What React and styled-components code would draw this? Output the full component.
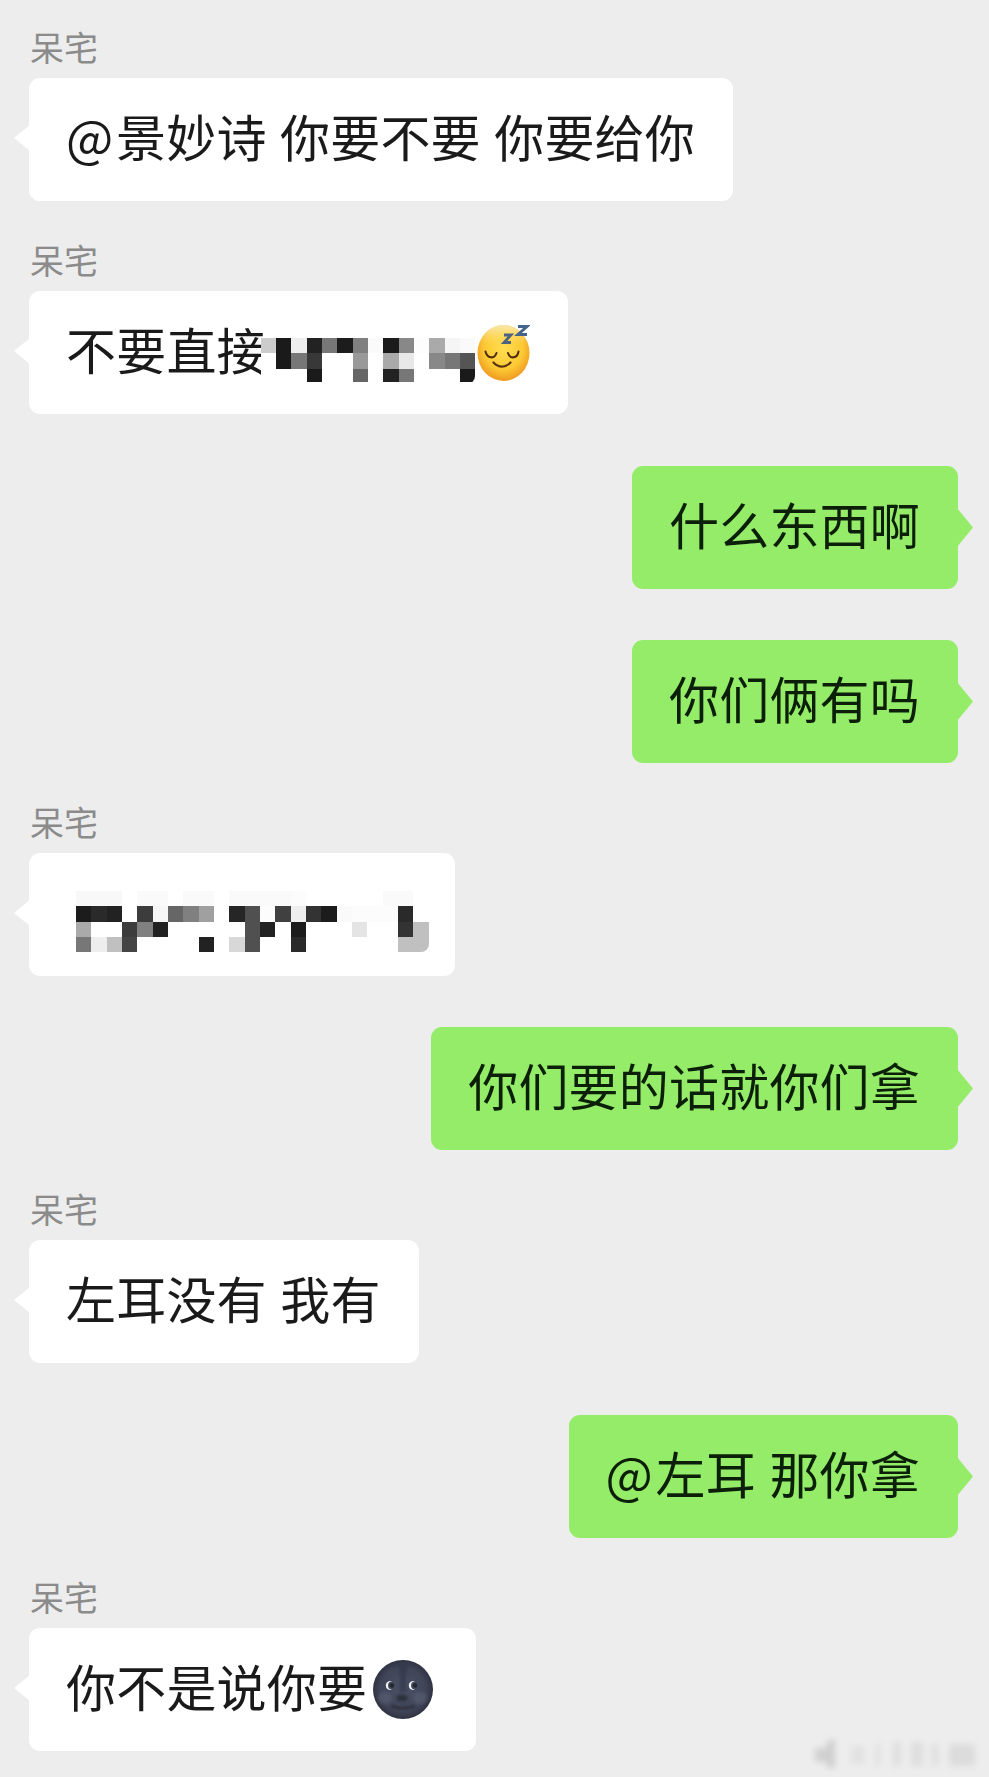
import React from "react";
import styled, { createGlobalStyle } from "styled-components";

const GlobalStyle = createGlobalStyle`
  html, body {
    margin: 0;
    padding: 0;
    background: #ededed;
  }
  body {
    font-family: "Noto Sans CJK SC", "Liberation Sans", sans-serif;
  }
`;

const Page = styled.div`
  width: 989px;
  height: 1777px;
  position: relative;
  overflow: hidden;
  display: flex;
  flex-direction: column;
  padding: 29px 31px 0 29px;
  box-sizing: border-box;
  background: #ededed;
`;

const Message = styled.div`
  display: flex;
  flex-direction: column;
  align-items: ${(props) => (props.$mine ? "flex-end" : "flex-start")};
  margin-top: ${(props) => props.$gap || 0}px;
`;

const Name = styled.div`
  height: 40px;
  line-height: 36px;
  margin-bottom: 9px;
  padding-left: 1px;
  font-size: 34px;
  color: #8b8b8b;
`;

const Bubble = styled.div`
  position: relative;
  display: flex;
  align-items: center;
  height: 123px;
  padding: ${(props) => props.$pad || "0 38px 0 37px"};
  box-sizing: border-box;
  border-radius: 11px;
  background: ${(props) => (props.$mine ? "#95ec69" : "#ffffff")};
  color: ${(props) => (props.$mine ? "#0c1f08" : "#1a1a1a")};
  font-size: 50px;
  letter-spacing: 0.2px;
  word-spacing: 2px;
  white-space: pre;

  /* little tail pointing at the sender */
  &::before {
    content: "";
    position: absolute;
    top: ${(props) => (props.$mine ? "42px" : "47px")};
    ${(props) => (props.$mine ? "right: -15px" : "left: -15px")};
    width: 16px;
    height: ${(props) => (props.$mine ? "39px" : "26px")};
    background: inherit;
    clip-path: ${(props) =>
      props.$mine
        ? "polygon(0 0, 100% 50%, 0 100%)"
        : "polygon(100% 0, 0 50%, 100% 100%)"};
  }
`;

const Text = styled.span`
  padding-bottom: 10px;
`;

const At = styled.span`
  margin-right: 2.5px;
`;

const Mosaic = styled.div`
  position: relative;
  flex: none;
  display: grid;
  grid-template-columns: repeat(${(props) => props.$cols}, 15.33px);
  grid-auto-rows: 15.33px;
  height: ${(props) => props.$height}px;
  overflow: hidden;
  margin: ${(props) => props.$margin};
  filter: blur(0.5px);
`;

const Cell = styled.div`
  background: ${(props) => props.$c};
  border-bottom-right-radius: ${(props) => (props.$round ? "8px" : "0")};
`;

const EmojiSvg = styled.svg`
  position: relative;
  flex: none;
  display: block;
  margin: ${(props) => props.$margin};
`;

const Watermark = styled.svg`
  position: absolute;
  right: 4px;
  bottom: 5px;
`;

const sleepyRows = [
  ["#ccc", "#1a1a1a", "#eee", "#222", "#777", "#1c1c1c", "#808080", "#fafafa", "#1b1b1b", "#888", "#fdfdfd", "#aaa", "#f5f5f5", "#fafafa"],
  ["#fff", "#1a1a1a", "#777", "#383838", "#fff", "#fff", "#999", "#fff", "#aaa", "#e8e8e8", "#fff", "#888", "#777", "#555"],
  ["#fff", "#fff", "#fff", "#1a1a1a", "#fff", "#fff", "#666", "#fff", "#222", "#777", "#fff", "#fff", "#fff", "#1a1a1a"],
];

const redactedRows = [
  ["#f8f8f8", "#f8f8f8", "#f8f8f8", "#fff", "#fafafa", "#fafafa", "#fff", "#fafafa", "#fafafa", "#fff", "#fafafa", "#fafafa", "#fafafa", "#fafafa", "#fcfcfc", "#fff", "#fff", "#fff", "#fff", "#fff", "#fafafa", "#fafafa", "#fff"],
  ["#1c1c1c", "#2a2a2a", "#222", "#fff", "#3c3c3c", "#f6f6f6", "#666", "#808080", "#a0a0a0", "#fff", "#262626", "#505050", "#fcfcfc", "#404040", "#eee", "#333", "#1c1c1c", "#fafafa", "#fcfcfc", "#fcfcfc", "#fcfcfc", "#2a2a2a", "#fff"],
  ["#aaa", "#fff", "#fff", "#3c3c3c", "#808080", "#222", "#fff", "#fff", "#fff", "#fff", "#fff", "#505050", "#222", "#fff", "#1c1c1c", "#fff", "#fff", "#fff", "#e4e4e4", "#fff", "#fff", "#333", "#c0c0c0"],
  ["#777", "#eee", "#c0c0c0", "#444", "#fff", "#fff", "#fff", "#fff", "#222", "#fff", "#d8d8d8", "#505050", "#fff", "#fff", "#2a2a2a", "#fff", "#fff", "#fff", "#fff", "#fff", "#fff", "#c0c0c0", "#c0c0c0"],
];

const Pixels = ({ rows, margin, height }) => (
  <Mosaic $cols={rows[0].length} $margin={margin} $height={height}>
    {rows.flatMap((row, r) =>
      row.map((c, i) => (
        <Cell
          key={`${r}-${i}`}
          $c={c}
          $round={r === rows.length - 1 && i === row.length - 1}
        />
      ))
    )}
  </Mosaic>
);

const SleepingFace = () => (
  <EmojiSvg width="55" height="58" viewBox="0 0 55 58" $margin="1px 0 0 0">
    <defs>
      <radialGradient id="sleepy" cx="50%" cy="42%" r="60%">
        <stop offset="0%" stopColor="#ffdd50" />
        <stop offset="62%" stopColor="#fcc933" />
        <stop offset="100%" stopColor="#ee9420" />
      </radialGradient>
      <linearGradient id="sleepyTop" x1="0" y1="0" x2="0" y2="1">
        <stop offset="0%" stopColor="#f8edc0" stopOpacity="0.9" />
        <stop offset="35%" stopColor="#ffe680" stopOpacity="0" />
      </linearGradient>
    </defs>
    <ellipse cx="28.5" cy="29" rx="26" ry="28" fill="url(#sleepy)" />
    <ellipse cx="28.5" cy="29" rx="26" ry="28" fill="url(#sleepyTop)" />
    <path d="M10.5 27.5c1.5 7 9 8 11 1.5M33 29c2 6.500 9.500 5.500 10.500-1.500" fill="none" stroke="#4e2d0c" strokeWidth="2" strokeLinecap="round" />
    <path d="M18.500 38.500c5 5.500 12 5.500 17 0" fill="none" stroke="#5a3410" strokeWidth="2.200" strokeLinecap="round" />
    <path d="M29 11h7l-7 7.500h7" fill="none" stroke="#4d6480" strokeWidth="2.800" />
    <path d="M43 2.500h9l-9 8h9" fill="none" stroke="#45648c" strokeWidth="3" />
  </EmojiSvg>
);

const MoonFace = () => (
  <EmojiSvg width="60" height="59" viewBox="0 0 60 59" $margin="0 0 0 6px">
    <defs>
      <radialGradient id="moon" cx="50%" cy="50%" r="52%">
        <stop offset="0%" stopColor="#4c5166" />
        <stop offset="72%" stopColor="#414558" />
        <stop offset="100%" stopColor="#2c2f3e" />
      </radialGradient>
      <filter id="soft">
        <feGaussianBlur stdDeviation="1.600" />
      </filter>
    </defs>
    <ellipse cx="30" cy="29.500" rx="30" ry="29.500" fill="url(#moon)" />
    <g filter="url(#soft)">
      <path d="M25 4c2 10 3 18 1 28h8c-2-10-1-18 1-28z" fill="#2f3242" opacity="0.6" />
      <ellipse cx="29" cy="38" rx="6" ry="3.500" fill="#23262f" opacity="0.75" />
      <path d="M18 46c7 3 17 3 24 0" fill="none" stroke="#2a2d3a" strokeWidth="2.500" />
      <ellipse cx="12" cy="38" rx="7" ry="6" fill="#5c6278" opacity="0.55" />
      <ellipse cx="47" cy="38" rx="7" ry="6" fill="#5c6278" opacity="0.55" />
    </g>
    <path d="M19 21.500a4.400 4.400 0 1 0 0 8a3.600 3.600 0 0 1 0-8z" fill="#f2f4f6" />
    <circle cx="19" cy="25.500" r="2.200" fill="#23262f" />
    <path d="M42 21.500a4.400 4.400 0 1 0 0 8a3.600 3.600 0 0 1 0-8z" fill="#f2f4f6" />
    <circle cx="42" cy="25.500" r="2.200" fill="#23262f" />
  </EmojiSvg>
);

const App = () => {
  return (
    <Page>
      <GlobalStyle />
      <Message>
        <Name>呆宅</Name>
        <Bubble>
          <Text><At>@</At>景妙诗 你要不要 你要给你</Text>
        </Bubble>
      </Message>
      <Message $gap={41}>
        <Name>呆宅</Name>
        <Bubble>
          <Text>不要直接</Text>
          <Pixels rows={sleepyRows} height={44} margin="15px 0 0 -6px" />
          <SleepingFace />
        </Bubble>
      </Message>
      <Message $mine $gap={52}>
        <Bubble $mine>
          <Text>什么东西啊</Text>
        </Bubble>
      </Message>
      <Message $mine $gap={51}>
        <Bubble $mine>
          <Text>你们俩有吗</Text>
        </Bubble>
      </Message>
      <Message $gap={41}>
        <Name>呆宅</Name>
        <Bubble $pad="0 26px 0 47px">
          <Pixels rows={redactedRows} height={61} margin="14px 0 0 0" />
        </Bubble>
      </Message>
      <Message $mine $gap={51}>
        <Bubble $mine>
          <Text>你们要的话就你们拿</Text>
        </Bubble>
      </Message>
      <Message $gap={41}>
        <Name>呆宅</Name>
        <Bubble>
          <Text>左耳没有 我有</Text>
        </Bubble>
      </Message>
      <Message $mine $gap={52}>
        <Bubble $mine>
          <Text><At>@</At>左耳 那你拿</Text>
        </Bubble>
      </Message>
      <Message $gap={41}>
        <Name>呆宅</Name>
        <Bubble $pad="0 43px 0 37px">
          <Text>你不是说你要</Text>
          <MoonFace />
        </Bubble>
      </Message>
      {/* blurred stamp in the corner */}
      <Watermark width="176" height="40" viewBox="0 0 176 40">
        <defs>
          <filter id="smear" x="-20%" y="-40%" width="140%" height="180%">
            <feGaussianBlur stdDeviation="3" />
          </filter>
        </defs>
        <g filter="url(#smear)">
          <rect x="6" y="16" width="20" height="14" fill="#d0d0d0" />
          <rect x="18" y="8" width="8" height="28" fill="#cfcfcf" />
          <rect x="42" y="14" width="14" height="18" fill="#e2e2e2" />
          <rect x="66" y="12" width="6" height="22" fill="#e2e2e2" />
          <rect x="84" y="10" width="8" height="24" fill="#dedede" />
          <rect x="102" y="10" width="12" height="24" fill="#dedede" />
          <rect x="122" y="12" width="8" height="22" fill="#e0e0e0" />
          <rect x="140" y="12" width="26" height="22" fill="#dcdcdc" />
        </g>
      </Watermark>
    </Page>
  );
};

export default App;
